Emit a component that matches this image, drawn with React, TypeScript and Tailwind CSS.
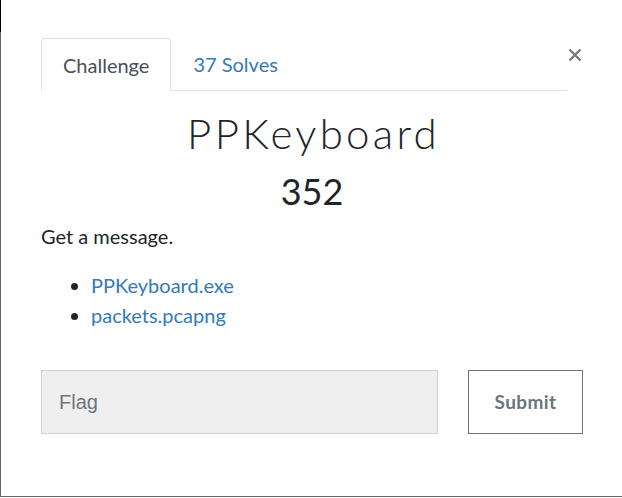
import React from "react";

export default function App() {
  return (
    <div className="relative w-[622px] h-[498px] bg-white overflow-hidden" style={{ fontFamily: "Lato, 'Open Sans', sans-serif" }}>
      <div className="absolute left-0 top-0 w-px h-[32px] bg-black" />
      <div className="h-[497px] border-l border-b border-[#666666] pl-[40px] pr-[39px] pt-[38px]">
        <div className="flex items-start">
          <div className="flex w-[526px] h-[53px] border-b border-[#dee2e6]">
            <div className="h-[53px] px-[21px] flex items-center border border-[#dee2e6] border-b-white rounded-t-[4px] bg-white text-[20px] text-[#495057] -mb-px">
              Challenge
            </div>
            <div className="h-[52px] px-[22px] flex items-center text-[20px] text-[#337ab7]">
              37 Solves
            </div>
          </div>
          <button className="ml-[1px] mt-[10px] w-[14px] h-[14px] flex items-center justify-center text-[#777777]">
            <svg width="14" height="14" viewBox="0 0 14 14">
              <path d="M1.5 1.5 L12.5 12.5 M12.5 1.5 L1.5 12.5" stroke="#7a7a7a" strokeWidth="2.4" strokeLinecap="butt" />
            </svg>
          </button>
        </div>

        <h1 className="mt-[18px] pl-[3px] text-center text-[42px] leading-[48px] font-light text-[#212529] tracking-[3.3px]">PPKeyboard</h1>
        <h2 className="mt-[13px] text-center text-[36px] leading-[43px] text-[#212529]">352</h2>

        <p className="mt-[8px] text-[20px] leading-[30px] text-[#212529]">Get a message.</p>
        <ul className="mt-[19px] pl-[50px] list-disc text-[20px] leading-[30px] text-[#337ab7] marker:text-[#212529]">
          <li><span>PPKeyboard.exe</span></li>
          <li><span>packets.pcapng</span></li>
        </ul>

        <div className="mt-[40px] flex justify-between">
          <div className="w-[397px] h-[64px] bg-[#efefef] border border-[#cfd3d8] flex items-center pl-[17px] text-[20px] text-[#6c757d]" style={{ fontFamily: "'Liberation Sans', Arial, sans-serif" }}>
            Flag
          </div>
          <button className="w-[115px] h-[64px] border border-[#6c757d] bg-white text-[19px] font-bold text-[#6c757d] tracking-[0.4px]">
            Submit
          </button>
        </div>
      </div>
    </div>
  );
}
